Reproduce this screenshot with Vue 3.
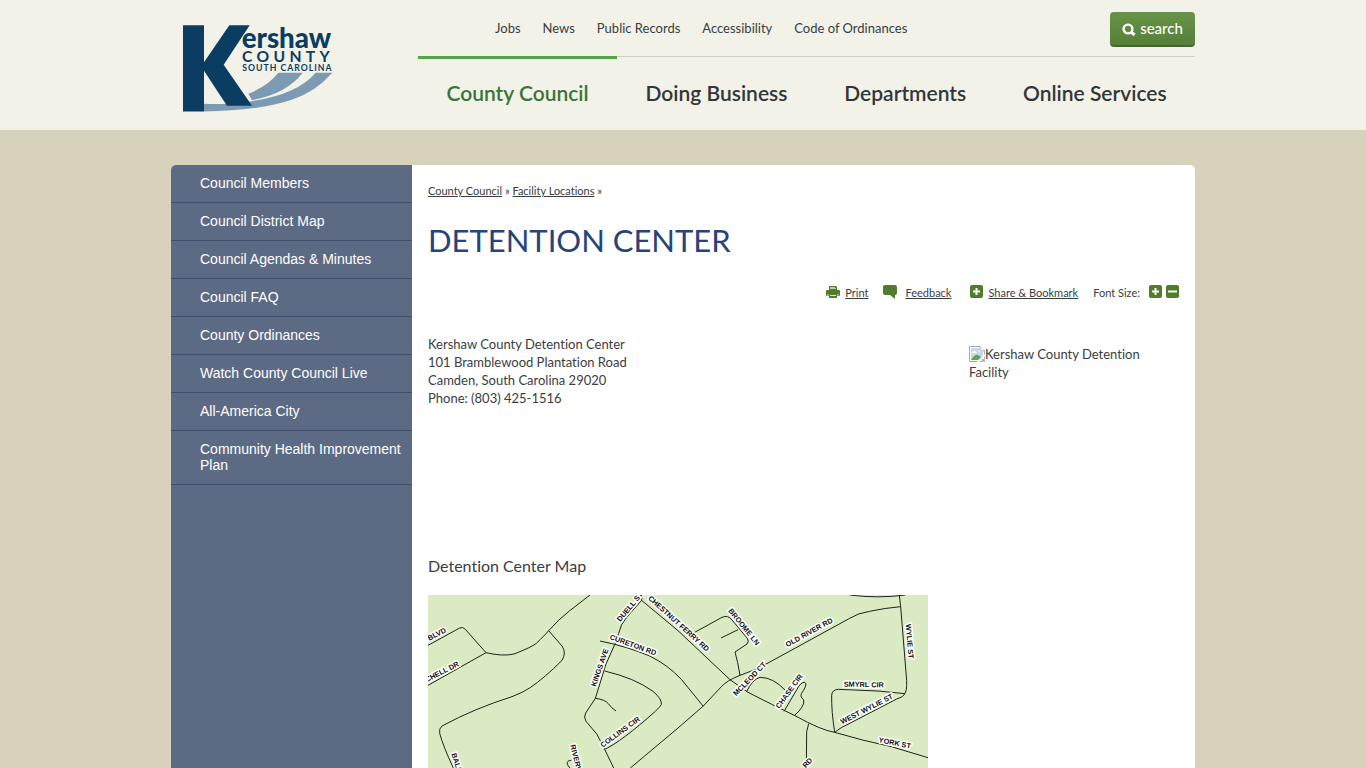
<script setup>
const utilityLinks = ['Jobs', 'News', 'Public Records', 'Accessibility', 'Code of Ordinances']
const mainLinks = ['County Council', 'Doing Business', 'Departments', 'Online Services']
const sideLinks = [
  'Council Members',
  'Council District Map',
  'Council Agendas & Minutes',
  'Council FAQ',
  'County Ordinances',
  'Watch County Council Live',
  'All-America City',
  'Community Health Improvement Plan',
]

const roads = [
  'M0 166 L95 114 Q104 109 112 118 L174 188 L0 286',
  'M174 188 Q225 200 258 192 Q310 172 325 160 Q350 136 362 122 Q392 88 424 63 L486 15',
  'M362 122 L402 168 Q416 188 402 211 Q352 262 305 294 Q285 307 252 320 Q140 355 42 408 Q32 416 35 430 Q46 470 76 534',
  'M645 15 L640 32 L596 82 Q578 102 572 130 L560 164 L534 222 L502 325 L473 369 Q466 381 474 394 L507 433 L530 478 L557 534',
  'M516 153 Q600 170 665 198 Q720 225 760 268 L826 349',
  'M530 243 Q620 264 675 304 Q703 328 700 344 Q696 350 682 364 Q580 455 530 478',
  'M502 325 Q532 329 541 341 Q550 354 564 363',
  'M630 22 L750 122 L906 269 L960 307 Q1030 343 1101 377 Q1180 421 1220 427 Q1300 451 1390 470 L1500 503',
  'M607 534 L750 414 L826 348 L880 290 Q896 272 936 256 Q985 240 1020 219 L1265 85 Q1290 69 1325 64 Q1370 54 1418 50',
  'M800 127 L882 82 Q900 74 912 90 L958 145 Q964 155 957 162 L921 186 L929 218 L936 256',
  'M879 144 L930 119',
  'M956 305 Q972 269 996 262 Q1035 262 1071 300',
  'M1068 364 L1107 298 Q1118 276 1130 277 Q1139 280 1126 302 Q1111 319 1127 329 Q1132 348 1099 377',
  'M1414 15 L1418 50 L1436 272 Q1437 304 1430 311 Q1428 320 1406 327 L1240 413 L1220 427 Q1210 363 1211 316 Q1212 299 1231 298 L1350 303 L1431 311',
  'M1265 15 Q1350 26 1432 15',
  'M1142 401 L1136 425 L1135 534',
  'M430 511 Q415 511 418 524 L426 534',
]

const labels = [
  { t: 'BLVD', x: 4, y: 152, r: -27 },
  { t: 'CHELL DR', x: -4, y: 277, r: -27 },
  { t: 'BALL', x: 70, y: 492, r: 72 },
  { t: 'DUELL ST', x: 577, y: 96, r: -50 },
  { t: 'CHESTNUT FERRY RD', x: 659, y: 27, r: 42 },
  { t: 'CURETON RD', x: 544, y: 147, r: 20 },
  { t: 'KINGS AVE', x: 503, y: 291, r: -71 },
  { t: 'COLLINS CIR', x: 524, y: 473, r: -36 },
  { t: 'RIVERVIEW', x: 427, y: 466, r: 76 },
  { t: 'BROOME LN', x: 900, y: 63, r: 51 },
  { t: 'OLD RIVER RD', x: 1078, y: 172, r: -29 },
  { t: 'MCLEOD CT', x: 925, y: 319, r: -46 },
  { t: 'CHASE CIR', x: 1054, y: 357, r: -54 },
  { t: 'WYLIE ST', x: 1433, y: 103, r: 85 },
  { t: 'SMYRL CIR', x: 1247, y: 290, r: 1 },
  { t: 'WEST WYLIE ST', x: 1242, y: 403, r: -27 },
  { t: 'YORK ST', x: 1351, y: 457, r: 11 },
  { t: 'RD', x: 1133, y: 535, r: -48 },
]
</script>

<template>
  <div class="page">
    <header class="header">
      <div class="wrap header-grid">
        <a href="#" class="logo" aria-label="Kershaw County South Carolina">
          <svg viewBox="39 44 450 260" width="150" height="87">
            <path d="M235 250 Q295 226 325 187 H398 Q350 250 246 269Z" fill="#7d9ab3" />
            <path d="M102 280 Q150 282 200 278 L246 272 Q382 252 437 187 H487 Q435 246 365 268 Q265 301 102 303Z" fill="#7d9ab3" />
            <path d="M39 44 H102 V155 L178 44 H239 L161 163 L246 286 H171 L102 181 V303 H39Z" fill="#0b3c61" />
            <text x="215" y="111" class="logo-name">ershaw</text>
            <text x="216" y="154" class="logo-county">COUNTY</text>
            <text x="217" y="181" class="logo-state">SOUTH CAROLINA</text>
          </svg>
        </a>
        <div class="header-main">
          <div class="utility">
            <nav class="utility-links">
              <a v-for="l in utilityLinks" :key="l" href="#">{{ l }}</a>
            </nav>
            <button class="search" type="button">
              <svg width="14" height="14" viewBox="0 0 14 14" fill="none" stroke="#fff">
                <circle cx="6" cy="7" r="4.4" stroke-width="2.4" />
                <path d="M9 10 L12.6 13" stroke-width="3" />
              </svg>
              <span>search</span>
            </button>
          </div>
          <nav class="main-nav">
            <a v-for="(l, i) in mainLinks" :key="l" href="#" :class="{ active: i === 0 }">{{ l }}</a>
          </nav>
        </div>
      </div>
    </header>

    <div class="wrap body">
      <nav class="side">
        <a v-for="l in sideLinks" :key="l" href="#">{{ l }}</a>
      </nav>
      <main class="content">
        <div class="crumbs"><a href="#">County Council</a> » <a href="#">Facility Locations</a> »</div>
        <h1>DETENTION CENTER</h1>
        <div class="tools">
          <a href="#" class="tool">
            <svg width="14" height="13" viewBox="0 0 14 13" fill="#4f7d2a">
              <path d="M3 1H10L11 2V5H3Z" />
              <path d="M4 2H9V3H10V4H4Z" fill="#b9cda9" />
              <path d="M1 5H13Q14 5 14 6V10Q14 11 13 11H1Q0 11 0 10V6Q0 5 1 5Z" />
              <path d="M3 9H11V13H3Z" />
              <path d="M2 9V11M12 9V11M4 10.500H10" stroke="#dfe8d6" />
            </svg>
            <span>Print</span>
          </a>
          <a href="#" class="tool feedback">
            <svg width="14" height="14" viewBox="0 0 14 14" fill="#4f7d2a">
              <path d="M2 0H12Q14 0 14 2V8Q14 10 12 10V14L7 10H2Q0 10 0 8V2Q0 0 2 0Z" />
            </svg>
            <span>Feedback</span>
          </a>
          <a href="#" class="tool share">
            <svg width="13" height="13" viewBox="0 0 13 13">
              <rect width="13" height="13" rx="2" fill="#4f7d2a" />
              <path d="M3 6.500H10M6.500 3V10" stroke="#fff" stroke-width="2" />
            </svg>
            <span>Share &amp; Bookmark</span>
          </a>
          <span class="size-label">Font Size:</span>
          <button type="button" class="size" aria-label="Increase font size">
            <svg width="13" height="13" viewBox="0 0 13 13">
              <rect width="13" height="13" rx="2" fill="#4f7d2a" />
              <path d="M3 6.500H10M6.500 3V10" stroke="#fff" stroke-width="2" />
            </svg>
          </button>
          <button type="button" class="size" aria-label="Decrease font size">
            <svg width="13" height="13" viewBox="0 0 13 13">
              <rect width="13" height="13" rx="2" fill="#4f7d2a" />
              <path d="M2 6.500H11" stroke="#fff" stroke-width="2" />
            </svg>
          </button>
        </div>
        <div class="details">
          <address>
            Kershaw County Detention Center<br />101 Bramblewood Plantation Road<br />Camden, South Carolina
            29020<br />Phone: (803) 425-1516
          </address>
          <div class="photo">
            <svg width="16" height="16" viewBox="0 0 16 16">
              <path d="M.5 .5H11L15.500 5V15.500H.5Z" fill="#fff" stroke="#a8a8a8" />
              <path d="M2 2H10V6H14V14H2Z" fill="#c4d7f5" />
              <path d="M3 7Q3 5 5 5Q7 4 8 7Z" fill="#fff" />
              <path d="M2 14Q6 8 9 9L12 11L9 14Z" fill="#57a846" />
              <path d="M11 .5V5H15.500" fill="#fff" stroke="#a8a8a8" />
              <path d="M16 8L8 16H10L16 10Z" fill="#fff" />
              <path d="M11 16L16 11V16Z" fill="#b5bac2" />
            </svg>Kershaw County Detention Facility
          </div>
        </div>
        <h2>Detention Center Map</h2>
        <svg class="map" viewBox="0 15 1500 519" role="img" aria-label="Street map around the detention center">
          <rect x="0" y="15" width="1500" height="519" fill="#daeac3" />
          <path v-for="(d, i) in roads" :key="i" :d="d" class="road" />
          <text v-for="l in labels" :key="l.t" class="label" :transform="`translate(${l.x} ${l.y}) rotate(${l.r})`">{{ l.t }}</text>
        </svg>
      </main>
    </div>
  </div>
</template>

<style>
body {
  background: #d6d2bb;
}
</style>

<style scoped>
.page {
  min-height: 100vh;
  display: flex;
  flex-direction: column;
  font-family: Lato, sans-serif;
  font-variant-ligatures: none;
  color: #3a3d41;
}
a {
  color: inherit;
}
svg {
  display: block;
}
.wrap {
  width: 100%;
  max-width: 1024px;
  margin: 0 auto;
}
.header {
  background: #f2f2e9;
}
.header-grid {
  display: grid;
  grid-template-columns: 247px 1fr;
  height: 130px;
}
.logo {
  padding: 25px 0 0 12px;
}
.logo svg {
  overflow: visible;
}
.logo text {
  fill: #0b3c61;
}
.logo-name {
  font: 900 83px Lato, sans-serif;
}
.logo-county {
  font: 700 47px Lato, sans-serif;
  letter-spacing: 13px;
}
.logo-state {
  font: 700 26px Lato, sans-serif;
  letter-spacing: 3px;
}
.utility {
  height: 56px;
  display: flex;
  justify-content: space-between;
  align-items: flex-start;
  padding-left: 77px;
}
.utility-links {
  display: flex;
  gap: 22px;
  padding-top: 20px;
  font-size: 13px;
  line-height: 16px;
}
.utility-links a,
.main-nav a,
.side a {
  text-decoration: none;
}
.search {
  display: flex;
  align-items: center;
  justify-content: center;
  gap: 4px;
  width: 85px;
  height: 35px;
  margin-top: 12px;
  padding: 0;
  border: 0;
  border-bottom: 2px solid #44682b;
  border-radius: 4px;
  background: linear-gradient(#689347, #56803a);
  color: #fff;
  font: 500 15px/18px Lato, sans-serif;
}
.search span {
  padding-bottom: 2px;
}
.main-nav {
  display: flex;
  border-top: 1px solid #d0d1c6;
}
.main-nav a {
  flex: 1 1 auto;
  padding-top: 23px;
  text-align: center;
  font-size: 21px;
  line-height: 26px;
  font-weight: 600;
  color: #333639;
}
.main-nav .active {
  margin-top: -1px;
  border-top: 3px solid #52a549;
  padding-top: 21px;
  color: #3c7436;
}
.body {
  flex: 1;
  display: grid;
  grid-template-columns: 241px 1fr;
  margin-top: 35px;
  border-radius: 5px 5px 0 0;
  overflow: hidden;
  background: #fff;
}
.side {
  background: #5d6a83;
  color: #fff;
  font-family: "Liberation Sans", Arial, sans-serif;
  font-size: 14px;
  line-height: 16px;
}
.side a {
  display: block;
  padding: 10px 10px 11px 29px;
  border-bottom: 1px solid #404e6b;
}
.content {
  padding: 18px 16px 0;
}
.crumbs {
  font-size: 11px;
  line-height: 16px;
}
h1 {
  margin: 21px 0 0;
  font-size: 31px;
  line-height: 40px;
  font-weight: 400;
  color: #28427a;
}
.tools {
  display: flex;
  justify-content: flex-end;
  margin-top: 25px;
  font-size: 11px;
  line-height: 16px;
}
.tool {
  display: flex;
  gap: 5px;
  text-decoration: none;
}
.tool span {
  text-decoration: underline;
}
.feedback {
  gap: 8px;
  margin-left: 15px;
}
.share {
  margin-left: 19px;
}
.size-label {
  margin: 0 9px 0 15px;
}
.size {
  border: 0;
  padding: 0;
  background: none;
  align-self: flex-start;
}
.size + .size {
  margin-left: 4px;
}
.details {
  display: flex;
  justify-content: space-between;
  align-items: flex-start;
  min-height: 180px;
  margin-top: 34px;
  font-size: 13px;
  line-height: 18px;
}
address {
  font-style: normal;
}
.photo {
  width: 210px;
  padding-top: 10px;
}
.photo svg {
  display: inline-block;
  vertical-align: -3px;
}
h2 {
  margin: 41px 0 19px;
  font-size: 16px;
  line-height: 20px;
  font-weight: 400;
}
.map {
  width: 100%;
  max-width: 500px;
}
.road {
  fill: none;
  stroke: #1c2418;
  stroke-width: 3;
}
.label {
  font: 700 22px "Liberation Sans", Arial, sans-serif;
  fill: #111;
  stroke: #fff;
  stroke-width: 9px;
  stroke-linejoin: round;
  paint-order: stroke;
}
</style>
